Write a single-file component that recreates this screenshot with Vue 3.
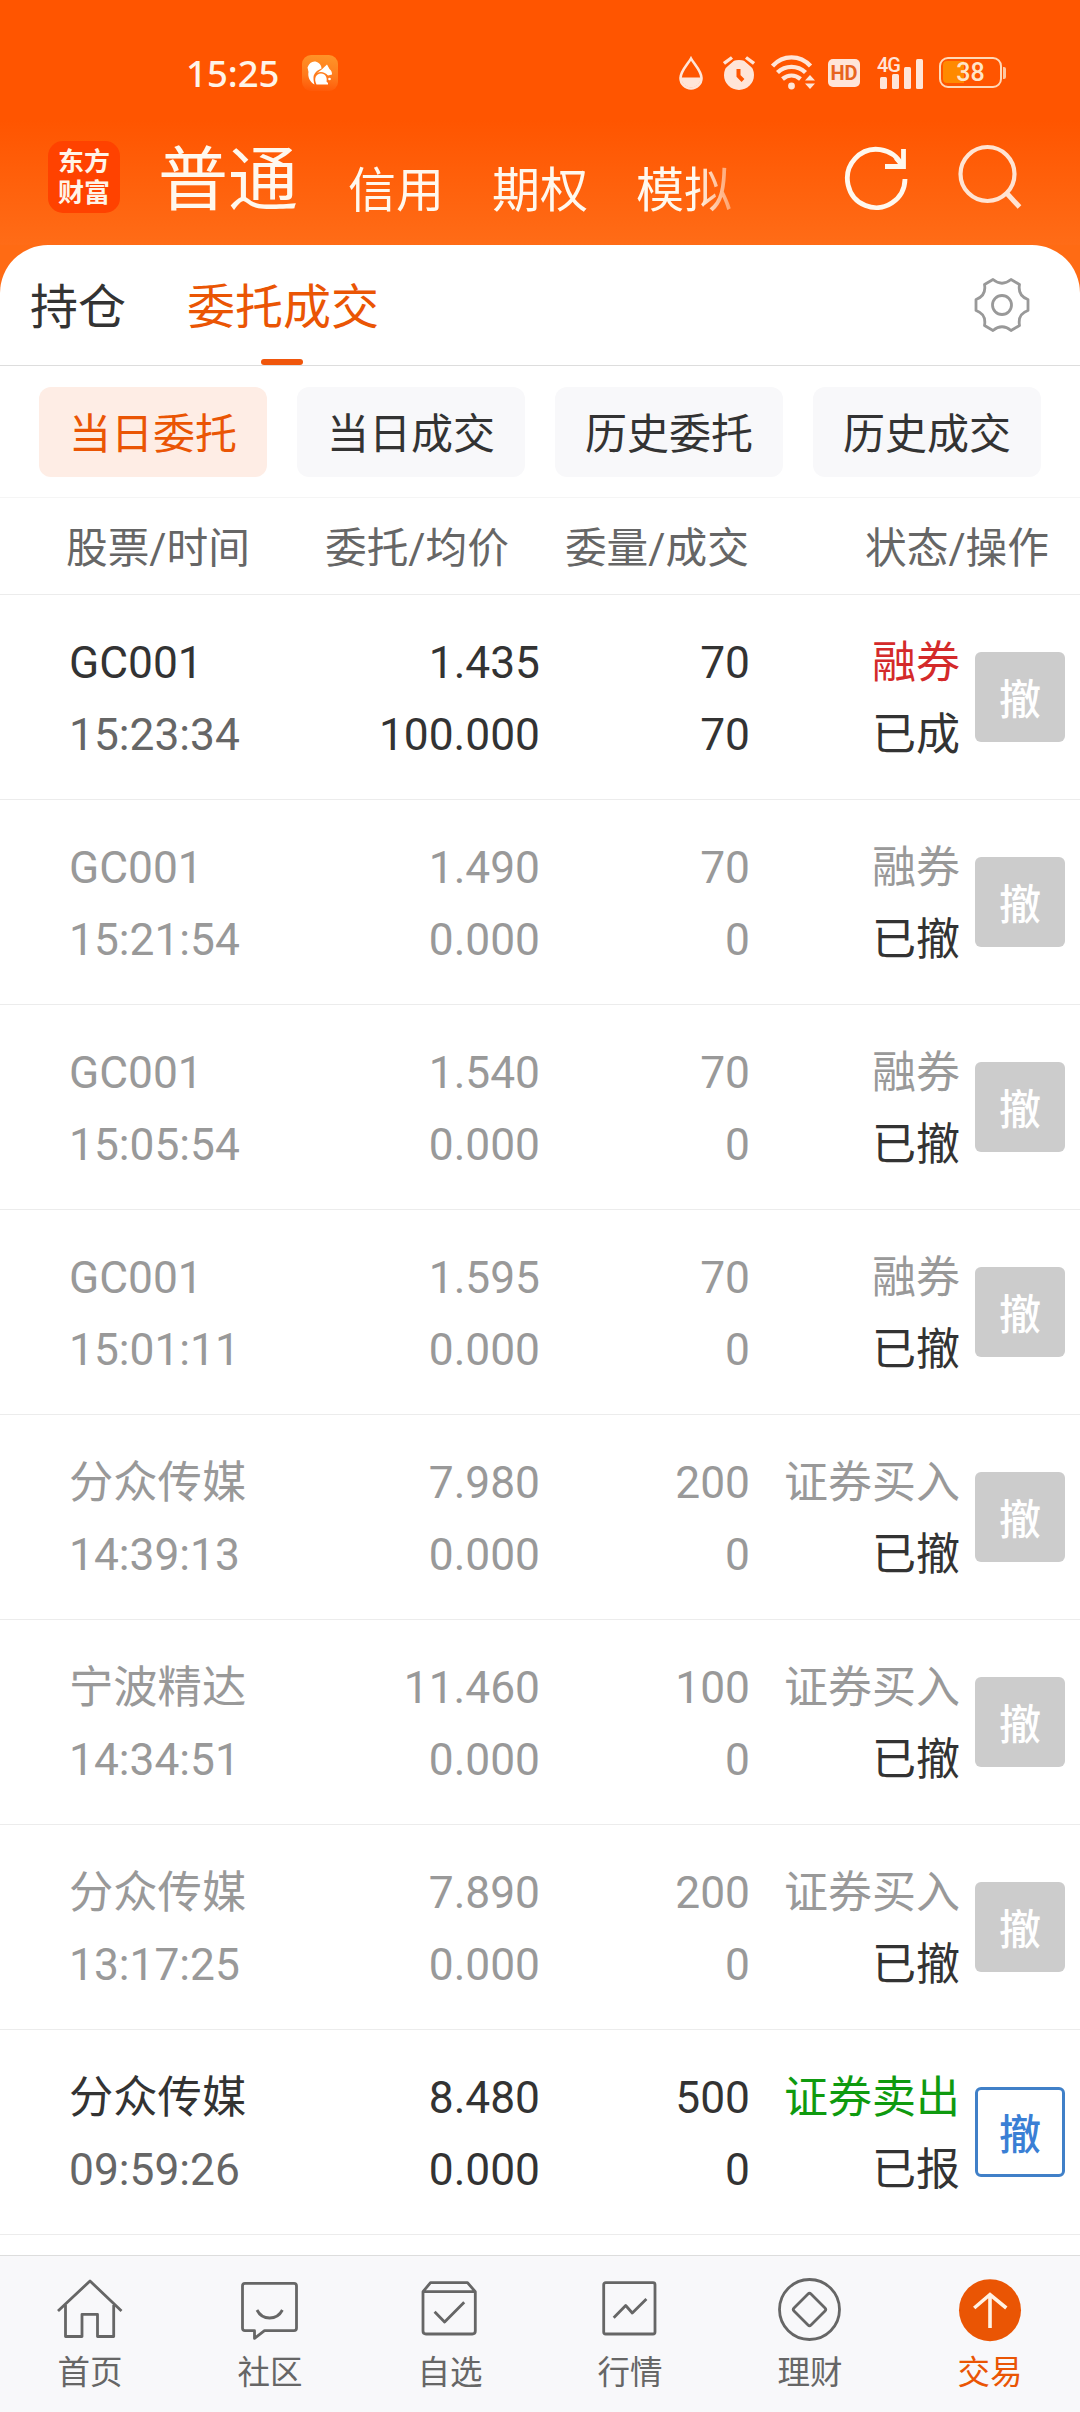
<template>
  <div class="page">
    <header class="top">
      <div class="status-bar">
        <span class="clock">15:25</span>
        <svg class="app-icon" width="36" height="36" viewBox="0 0 36 36">
          <defs>
            <linearGradient id="appBg" x1="0.7" y1="0" x2="0.6" y2="1">
              <stop offset="0" stop-color="#ff9428" />
              <stop offset="0.6" stop-color="#ff7a1c" />
              <stop offset="1" stop-color="#ff5a08" />
            </linearGradient>
          </defs>
          <rect width="36" height="36" rx="9" fill="url(#appBg)" />
          <g fill="#fff">
            <path d="M12.500 29.500C8 27 5.500 22 6.500 17L5.500 12.500C7 8 10 6 13.500 6.500C17 7.500 19.500 10 19.500 13.500C15.500 15 12 18 11.500 22C11.300 25 12 28 12.500 29.500Z" />
            <path d="M15 18C18 16 22 12.500 25 9.500L27.500 14C29.500 15.500 30 17.500 30 19.500L26 20.500C23 17 18.500 16 15 18Z" />
            <path d="M14.500 29.500C11.500 23.500 14 18.500 19 18.500C23.500 18.500 25.500 23 24.500 26.500L26 28V29.500Z" />
            <circle cx="27.500" cy="24" r="1.300" />
          </g>
        </svg>

        <div class="status-icons">
          <svg class="drop" width="24" height="34" viewBox="0 0 24 34">
            <path d="M12 2.500C9 8 1.500 15 1.500 22A10.500 10.500 0 0 0 22.500 22C22.500 15 15 8 12 2.500Z" fill="none" stroke="#ffe5d8" stroke-width="2.600" />
            <path d="M2 21.500H22A10 10 0 0 1 2 21.500Z" fill="#ffe5d8" />
          </svg>
          <svg class="alarm" width="32" height="34" viewBox="0 0 32 34">
            <circle cx="16" cy="19" r="15" fill="#ffe5d8" />
            <path d="M1 9.500L9 2.500M31 9.500L23 2.500" stroke="#ff5500" stroke-width="6" />
            <path d="M1 7.500L9 1.500M31 7.500L23 1.500" stroke="#ffe5d8" stroke-width="3.400" />
            <path d="M15.500 13V20L20 24.500" fill="none" stroke="#ff5500" stroke-width="4" />
          </svg>
          <svg class="wifi" width="45" height="35" viewBox="0 0 45 35">
            <g fill="none" stroke="#ffe5d8" stroke-width="4.400">
              <path d="M1.500 11C12 -0.500 29 -0.500 39.500 11" />
              <path d="M6.500 17.500C14.500 10 26.500 10 34.500 17.500" />
              <path d="M11.500 24C17 19.500 24 19.500 29.500 24" />
            </g>
            <circle cx="20.500" cy="31" r="3.400" fill="#ffe5d8" />
            <path d="M34 25.500L39 20L44 25.500ZM34 28.500L39 34L44 28.500Z" fill="#ffe5d8" />
          </svg>
          <span class="hd">HD</span>
          <div class="signal">
            <span class="net">4G</span>
            <svg width="48" height="32" viewBox="0 0 48 32">
              <g fill="#ffe5d8">
                <rect x="3" y="20" width="7" height="12" rx="1.500" />
                <rect x="15" y="17" width="7" height="15" rx="1.500" />
                <rect x="27" y="10" width="7" height="22" rx="1.500" />
                <rect x="39" y="2" width="7" height="30" rx="1.500" />
              </g>
            </svg>
          </div>
          <div class="battery">
            <div class="battery-body">
              <i class="battery-fill" :style="{ width: battery * 0.55 + 'px' }"></i>
              <span>{{ battery }}</span>
            </div>
            <i class="battery-nub"></i>
          </div>
        </div>
      </div>

      <div class="account-bar">
        <div class="logo"><span>东方</span><span>财富</span></div>
        <nav class="accounts">
          <span
            v-for="(name, index) in accounts"
            :key="name"
            :class="{ current: index === currentAccount }"
            @click="currentAccount = index"
            >{{ name }}</span
          >
        </nav>
        <svg class="refresh" width="66" height="70" viewBox="0 0 66 70" fill="none" stroke="#fff8ee">
          <path d="M62 36A28.800 29.200 0 1 1 59 22.500" stroke-width="4.800" />
          <path d="M60.500 6V23.500H42" stroke-width="4.800" />
          <path d="M53 15L60 23" stroke-width="4.800" />
        </svg>
        <svg class="search" width="66" height="70" viewBox="0 0 66 70" fill="none" stroke="#ffe4d3">
          <circle cx="30.500" cy="31" r="27" stroke-width="4.200" />
          <path d="M49.500 50L62.500 64" stroke-width="5" />
        </svg>
      </div>
    </header>

    <main class="card">
      <div class="tabs">
        <span
          v-for="(tab, index) in tabs"
          :key="tab"
          class="tab"
          :class="{ active: index === currentTab }"
          @click="currentTab = index"
          >{{ tab }}</span
        >
        <svg class="gear" width="56" height="56" viewBox="-28 -28 56 56" fill="none" stroke="#999" stroke-width="2.800">
          <path
            stroke-linejoin="round"
            d="M-9 -25.500Q0 -18 9 -25.500L17.500 -20.500Q15.500 -9 26 -5.500V5.500Q15.500 9 17.500 20.500L9 25.500Q0 18 -9 25.500L-17.500 20.500Q-15.500 9 -26 5.500V-5.500Q-15.500 -9 -17.500 -20.500Z"
          />
          <circle r="9.500" />
        </svg>
      </div>

      <div class="filters">
        <button
          v-for="(item, index) in filters"
          :key="item"
          :class="{ active: index === currentFilter }"
          @click="currentFilter = index"
        >
          {{ item }}
        </button>
      </div>

      <div class="list-head">
        <span>股票/时间</span>
        <span>委托/均价</span>
        <span>委量/成交</span>
        <span>状态/操作</span>
      </div>

      <div v-for="order in orders" :key="order.time" class="order" :class="{ muted: order.state === '已撤' }">
        <div class="col">
          <span>{{ order.name }}</span>
          <span class="time">{{ order.time }}</span>
        </div>
        <div class="col right">
          <span>{{ order.price }}</span>
          <span>{{ order.avg }}</span>
        </div>
        <div class="col right">
          <span>{{ order.amount }}</span>
          <span>{{ order.done }}</span>
        </div>
        <div class="col right status">
          <span :class="order.side">{{ order.type }}</span>
          <span class="state">{{ order.state }}</span>
        </div>
        <button class="cancel" :class="{ enabled: order.state === '已报' }">撤</button>
      </div>
    </main>

    <footer class="nav">
      <div class="nav-item">
        <svg width="72" height="72" viewBox="0 0 72 72">
          <path d="M4 37L36 7L67.500 37" />
          <path d="M11.500 31V62.500H28V40.300H43.500V62.500H59.700V31" />
        </svg>
        <span>首页</span>
      </div>
      <div class="nav-item">
        <svg width="72" height="72" viewBox="0 0 72 72">
          <path d="M11 9.300H60Q62.500 9.300 62.500 12V54Q62.500 56.700 60 56.700H30.500L20.500 64.300V56.700H11Q8.500 56.700 8.500 54V12Q8.500 9.300 11 9.300Z" />
          <path d="M23 36Q27 44 35.600 44T48.400 36" />
        </svg>
        <span>社区</span>
      </div>
      <div class="nav-item">
        <svg width="72" height="72" viewBox="0 0 72 72">
          <path d="M9 17.700L16.500 8.700H53.500L61.300 17.700V57Q61.300 60 58.300 60H12Q9 60 9 57ZM9 17.700H61.300" />
          <path d="M20.600 37.700L30.600 48L50.200 28.300" />
        </svg>
        <span>自选</span>
      </div>
      <div class="nav-item">
        <svg width="72" height="72" viewBox="0 0 72 72">
          <rect x="9.700" y="8.700" width="51.300" height="51.300" rx="2" />
          <path d="M19.700 43.700L31.700 31.500L38.300 39L52.400 25" />
        </svg>
        <span>行情</span>
      </div>
      <div class="nav-item">
        <svg width="72" height="72" viewBox="0 0 72 72">
          <circle cx="35.500" cy="35.500" r="30" />
          <path d="M34 20Q35.500 18.500 37 20L51 34Q52.500 35.500 51 37L37 51Q35.500 52.500 34 51L20 37Q18.500 35.500 20 34Z" />
        </svg>
        <span>理财</span>
      </div>
      <div class="nav-item active">
        <svg width="72" height="72" viewBox="0 0 72 72">
          <circle cx="36" cy="36.200" r="31" class="disc" />
          <path d="M20.200 34L36 20.500L52.300 34M36 20.500V54" class="arrow" />
        </svg>
        <span>交易</span>
      </div>
    </footer>
  </div>
</template>

<script setup>
import { ref } from 'vue'

const battery = ref(38)

const accounts = ['普通', '信用', '期权', '模拟']
const currentAccount = ref(0)

const tabs = ['持仓', '委托成交']
const currentTab = ref(1)

const filters = ['当日委托', '当日成交', '历史委托', '历史成交']
const currentFilter = ref(0)

const orders = ref([
  { name: 'GC001', time: '15:23:34', price: '1.435', avg: '100.000', amount: 70, done: 70, type: '融券', state: '已成', side: 'red' },
  { name: 'GC001', time: '15:21:54', price: '1.490', avg: '0.000', amount: 70, done: 0, type: '融券', state: '已撤' },
  { name: 'GC001', time: '15:05:54', price: '1.540', avg: '0.000', amount: 70, done: 0, type: '融券', state: '已撤' },
  { name: 'GC001', time: '15:01:11', price: '1.595', avg: '0.000', amount: 70, done: 0, type: '融券', state: '已撤' },
  { name: '分众传媒', time: '14:39:13', price: '7.980', avg: '0.000', amount: 200, done: 0, type: '证券买入', state: '已撤' },
  { name: '宁波精达', time: '14:34:51', price: '11.460', avg: '0.000', amount: 100, done: 0, type: '证券买入', state: '已撤' },
  { name: '分众传媒', time: '13:17:25', price: '7.890', avg: '0.000', amount: 200, done: 0, type: '证券买入', state: '已撤' },
  { name: '分众传媒', time: '09:59:26', price: '8.480', avg: '0.000', amount: 500, done: 0, type: '证券卖出', state: '已报', side: 'green' },
])
</script>

<style>
body {
  margin: 0;
  background: #fff;
}
</style>

<style scoped>
* {
  box-sizing: border-box;
}

.page {
  display: flex;
  flex-direction: column;
  width: 1080px;
  height: 2412px;
  overflow: hidden;
  color: #333;
  font-family: Roboto, 'Noto Sans CJK SC', sans-serif;
  background: #ff6b14;
}

button {
  padding: 0;
  border: 0;
  font-family: inherit;
}

.top {
  height: 245px;
  background: linear-gradient(#ff5500 120px, #ff6c17 245px);
}

.status-bar {
  display: flex;
  height: 120px;
  padding: 25px 74px 0 186px;
  align-items: center;
}

.clock {
  width: 116px;
  color: #fff4e8;
  font: 500 36.5px/48px 'Noto Sans', sans-serif;
}

.status-icons {
  display: flex;
  margin-left: auto;
  align-items: center;
}

.alarm {
  margin-left: 20px;
}

.wifi {
  margin-left: 16px;
}

.hd {
  width: 32px;
  height: 28px;
  margin-left: 12px;
  border-radius: 5px;
  color: #e8641e;
  background: #ffe5d8;
  font: 700 20px/29px Roboto, sans-serif;
  text-align: center;
}

.signal {
  position: relative;
  height: 32px;
  margin-left: 17px;
}

.signal svg {
  display: block;
}

.net {
  position: absolute;
  top: -2px;
  left: 0;
  color: #ffe5d8;
  font: 500 20px/20px Roboto, sans-serif;
  letter-spacing: -1px;
}

.battery {
  display: flex;
  margin-left: 14px;
  align-items: center;
}

.battery-body {
  position: relative;
  width: 63px;
  height: 31px;
  border: 2.5px solid #ffd9b8;
  border-radius: 9px;
  color: #ffe5c8;
  font: 500 25px/27px Roboto, sans-serif;
  text-align: center;
}

.battery-fill {
  position: absolute;
  top: 2px;
  left: 2px;
  height: 22px;
  border-radius: 4px 0 0 4px;
  background: #ff8a00;
}

.battery-body span {
  position: relative;
}

.battery-nub {
  width: 3px;
  height: 12px;
  margin-left: 1px;
  border-radius: 0 2px 2px 0;
  background: #ffc8a0;
}

.account-bar {
  display: flex;
  height: 125px;
  padding-left: 48px;
}

.logo {
  display: flex;
  flex-direction: column;
  width: 72px;
  height: 72px;
  margin-top: 21px;
  padding-top: 6px;
  border-radius: 15px;
  color: #fff4e8;
  background: #ff4200;
  font: 700 26px/31px Roboto, 'Noto Sans CJK SC', sans-serif;
  text-align: center;
}

.accounts {
  display: flex;
  width: 600px;
  height: 125px;
  margin-left: 36px;
  gap: 48px;
  align-items: flex-start;
  color: #fff8ee;
  font-size: 48px;
  line-height: 141px;
  white-space: nowrap;
  -webkit-mask-image: linear-gradient(90deg, #000 540px, transparent 600px);
  mask-image: linear-gradient(90deg, #000 540px, transparent 600px);
}

.accounts .current {
  width: 144px;
  font-size: 70px;
  line-height: 122px;
  text-align: center;
}

.refresh {
  margin: 23px 0 0 87px;
}

.search {
  margin: 23px 0 0 48px;
}

.card {
  flex: 1;
  border-radius: 48px 48px 0 0;
  background: #fff;
}

.tabs {
  display: flex;
  height: 121px;
  padding: 0 50px 0 30px;
  gap: 61px;
  align-items: center;
  border-bottom: 1px solid #ddd;
  font-size: 48px;
}

.tab {
  position: relative;
  height: 120px;
  line-height: 126px;
}

.tab.active {
  color: #ea5504;
}

.tab.active::after {
  content: '';
  position: absolute;
  bottom: 0;
  left: 50%;
  width: 42px;
  height: 6px;
  margin-left: -22px;
  border-radius: 3px;
  background: #f0560c;
}

.gear {
  margin-left: auto;
}

.filters {
  display: flex;
  height: 132px;
  padding: 21px 39px 0;
  gap: 30px;
  border-bottom: 1px solid #f5f5f5;
}

.filters button {
  width: 228px;
  height: 90px;
  padding-bottom: 3px;
  border-radius: 12px;
  color: #333;
  background: #f8f8fa;
  font-size: 42px;
}

.filters button.active {
  color: #ea5504;
  background: #feede5;
}

.list-head {
  display: flex;
  height: 97px;
  padding: 0 31px 0 66px;
  border-bottom: 1px solid #ececec;
  color: #666;
  font-size: 41.7px;
  line-height: 101px;
}

.list-head span:nth-child(2) {
  margin-left: 75px;
}

.list-head span:nth-child(3) {
  margin-left: 56px;
}

.list-head span:nth-child(4) {
  margin-left: auto;
}

.order {
  display: grid;
  grid-template-columns: 231px 240px 210px 210px 90px;
  height: 205px;
  padding-left: 69px;
  align-items: center;
  border-bottom: 1px solid #ececec;
  font-size: 44.3px;
  line-height: 72px;
}

.col {
  display: flex;
  flex-direction: column;
  padding-top: 4px;
}

.right {
  align-items: flex-end;
  white-space: nowrap;
}

.status {
  font-size: 44px;
}

.time {
  color: #666;
}

.muted,
.muted .time {
  color: #999;
}

.muted .state,
.state {
  color: #333;
}

.red {
  color: #d42a2a;
}

.green {
  color: #0f9a0f;
}

.cancel {
  width: 90px;
  height: 90px;
  margin-left: 15px;
  padding-bottom: 1px;
  border-radius: 6px;
  color: #fff;
  background: #ccc;
  font-size: 42px;
  font-weight: 500;
}

.cancel.enabled {
  border: 3px solid #4080c8;
  color: #3a7fd5;
  background: #fff;
}

.nav {
  display: flex;
  height: 157px;
  border-top: 1px solid #ddd;
  background: #f8f8fa;
}

.nav-item {
  display: flex;
  flex: 1;
  flex-direction: column;
  align-items: center;
  padding-top: 18px;
  color: #666;
  font-size: 32.5px;
  line-height: 55px;
}

.nav-item svg {
  fill: none;
  stroke: #666;
  stroke-width: 2.8;
  stroke-linejoin: round;
}

.nav-item.active {
  color: #ea5504;
}

.nav-item .disc {
  fill: #ea5504;
  stroke: none;
}

.nav-item .arrow {
  stroke: #fff2e4;
  stroke-width: 3.6;
  stroke-linejoin: miter;
}
</style>
